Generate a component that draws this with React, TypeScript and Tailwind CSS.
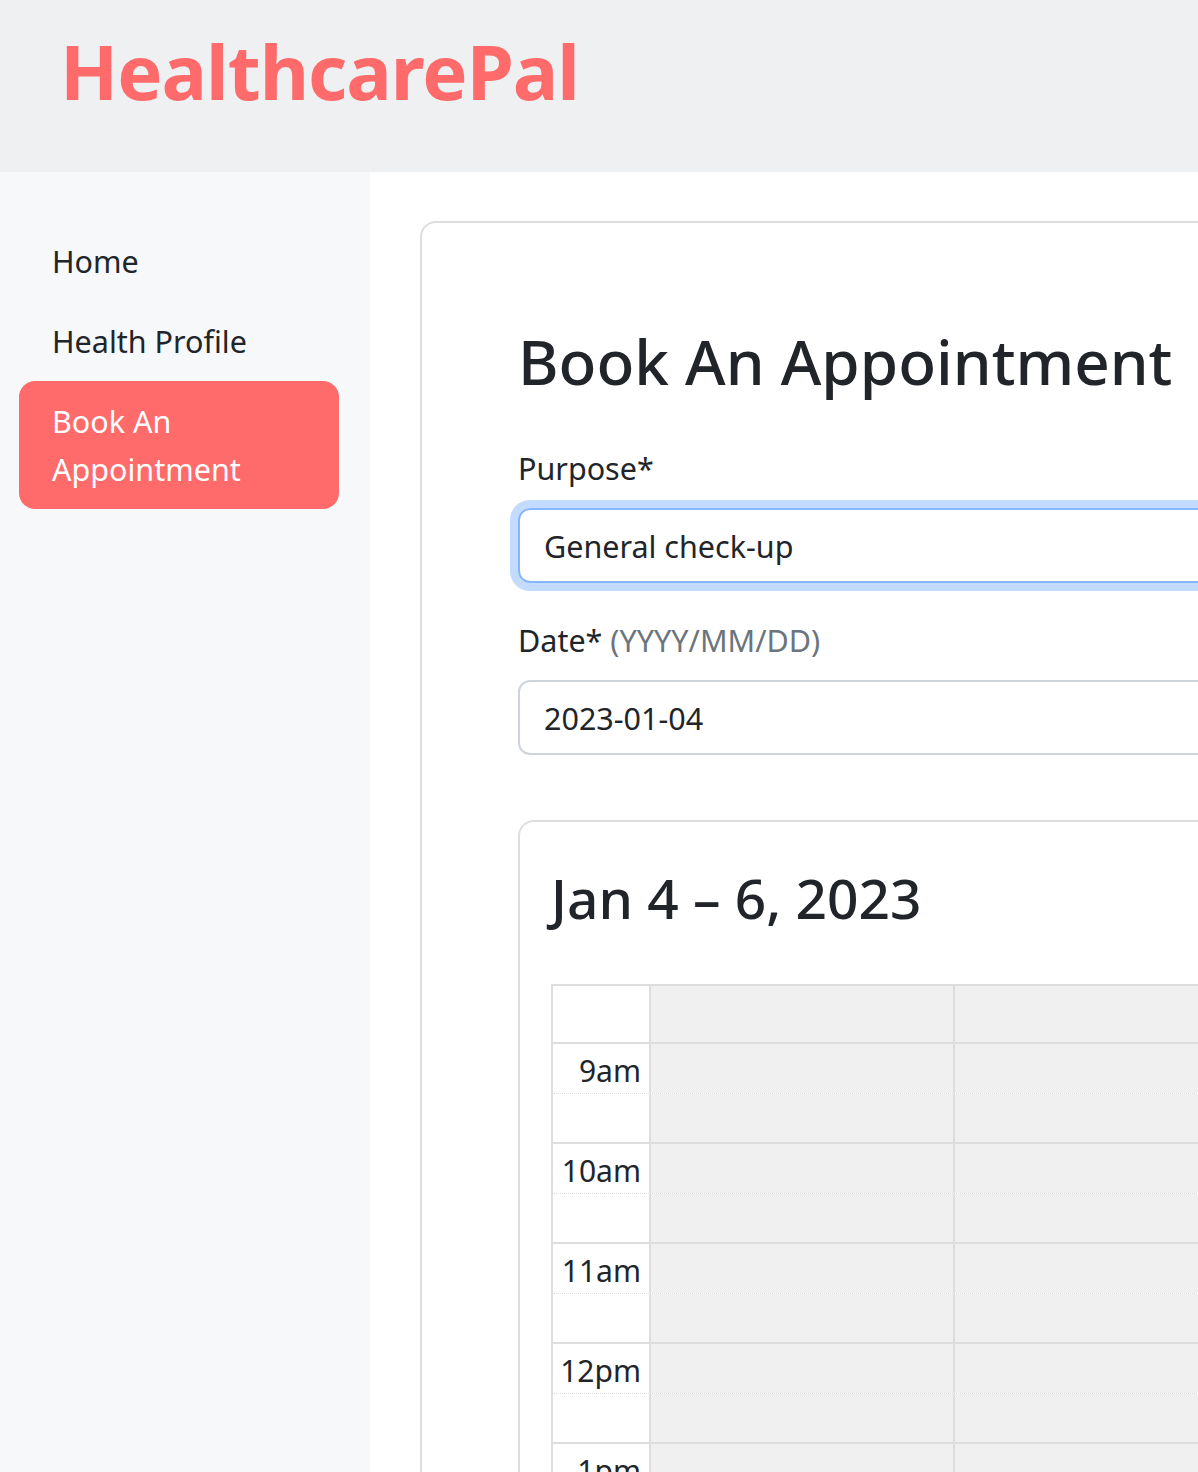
import React from 'react'

const font = { fontFamily: '"Noto Sans", "Open Sans", Arial, sans-serif' }

const hours = ['9am', '10am', '11am', '12pm', '1pm']
const days = ['2023-01-04', '2023-01-05', '2023-01-06']

function NavItem({ label, active }: { label: string; active?: boolean }) {
  return (
    <a
      href="#"
      className={`block rounded-[16px] px-[33px] py-[16px] text-[30.5px] leading-[48px] ${
        active ? 'bg-[#ff6a6a] text-white' : 'text-[#212529]'
      }`}
    >
      {label}
    </a>
  )
}

function Calendar() {
  return (
    <div className="rounded-[16px] border-2 border-[#dedede] px-[31px] pt-[43px] pb-[40px]">
      <h2 className="text-[55px] font-medium leading-[1.2] text-[#212529]">Jan 4 – 6, 2023</h2>
      <div className="mt-[53px] w-[1016px] border-2 border-[#dddddd]">
        <div className="flex h-[56px]">
          <div className="w-[98px] border-r-2 border-[#dddddd]" />
          {days.map((d) => (
            <div key={d} className="w-[304px] border-r-2 border-[#dddddd] bg-[#f0f0f0]" />
          ))}
        </div>
        {hours.map((h) => (
          <div key={h} className="border-t-2 border-[#dddddd]">
            <div className="flex h-[50px] border-b border-dotted border-[#dddddd]">
              <div className="w-[98px] border-r-2 border-[#dddddd] pr-[8px] pt-[5px] text-right text-[30px] leading-[44px] text-[#212529]">
                {h}
              </div>
              {days.map((d) => (
                <div key={d} className="w-[304px] border-r-2 border-[#dddddd] bg-[#f0f0f0]" />
              ))}
            </div>
            <div className="flex h-[48px]">
              <div className="w-[98px] border-r-2 border-[#dddddd]" />
              {days.map((d) => (
                <div key={d} className="w-[304px] border-r-2 border-[#dddddd] bg-[#f0f0f0]" />
              ))}
            </div>
          </div>
        ))}
      </div>
    </div>
  )
}

export default function App() {
  return (
    <div className="h-[1472px] w-[1198px] overflow-hidden bg-white" style={font}>
      <div className="w-[1900px]">
        <header className="h-[172px] bg-[#eff0f2] px-[60px] pt-[33px]">
          <h1 className="text-[76px] font-bold leading-none tracking-[-1px] text-[#ff6a6a]">HealthcarePal</h1>
        </header>
        <div className="flex">
          <aside className="min-h-[1300px] w-[370px] shrink-0 bg-[#f7f8fa] pl-[19px] pr-[31px] pt-[49px]">
            <nav>
              <NavItem label="Home" />
              <NavItem label="Health Profile" />
              <NavItem label="Book An Appointment" active />
            </nav>
          </aside>
          <main className="pl-[50px] pt-[49px]">
            <div className="w-[1400px] rounded-[16px] border-2 border-[#dedede] px-[96px] pt-[101px]">
              <h1 className="text-[62px] font-medium leading-[1.2] text-[#212529]">Book An Appointment</h1>
              <form className="mt-[46px]">
                <div className="mb-[33px]">
                  <label className="mb-[16px] block text-[30.5px] leading-[48px] text-[#212529]">Purpose*</label>
                  <input
                    defaultValue="General check-up"
                    className="block h-[75px] w-full rounded-[12px] border-2 border-[#86b7fe] px-[24px] text-[30.5px] leading-[48px] text-[#212529] shadow-[0_0_0_8px_rgba(13,110,253,0.25)] outline-none"
                  />
                </div>
                <div className="mb-[65px]">
                  <label className="mb-[16px] block text-[30.5px] leading-[48px] text-[#212529]">
                    Date* <span className="text-[#6c757d]">(YYYY/MM/DD)</span>
                  </label>
                  <input
                    defaultValue="2023-01-04"
                    className="block h-[75px] w-full rounded-[12px] border-2 border-[#ced4da] px-[24px] text-[30.5px] leading-[48px] text-[#212529] outline-none"
                  />
                </div>
                <Calendar />
              </form>
            </div>
          </main>
        </div>
      </div>
    </div>
  )
}
